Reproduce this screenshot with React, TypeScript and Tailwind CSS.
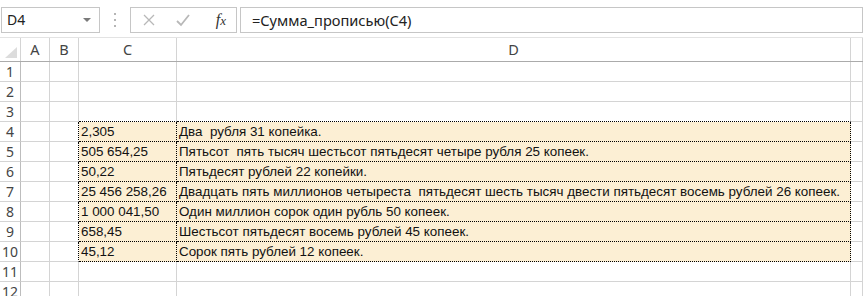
import React from "react";

const rows: { n: number; c?: string; d?: string }[] = [
  { n: 1 },
  { n: 2 },
  { n: 3 },
  { n: 4, c: "2,305", d: "Два  рубля 31 копейка." },
  { n: 5, c: "505 654,25", d: "Пятьсот  пять тысяч шестьсот пятьдесят четыре рубля 25 копеек." },
  { n: 6, c: "50,22", d: "Пятьдесят рублей 22 копейки." },
  {
    n: 7,
    c: "25 456 258,26",
    d: "Двадцать пять миллионов четыреста  пятьдесят шесть тысяч двести пятьдесят восемь рублей 26 копеек.",
  },
  { n: 8, c: "1 000 041,50", d: "Один миллион сорок один рубль 50 копеек." },
  { n: 9, c: "658,45", d: "Шестьсот пятьдесят восемь рублей 45 копеек." },
  { n: 10, c: "45,12", d: "Сорок пять рублей 12 копеек." },
  { n: 11 },
  { n: 12 },
];

const cols = "grid grid-cols-[21px_29px_29px_98px_674px_1fr]";

const App = () => {
  return (
    <div className="w-[863px] h-[296px] overflow-hidden bg-white font-['Noto_Sans',sans-serif]">
      {/* formula bar */}
      <div className="h-[37px] flex items-start pt-[7px] pl-[1px]">
        <div className="w-[101px] h-[26px] border border-[#c6c6c6] flex items-center justify-between pl-[5px] pr-[8px]">
          <span className="text-[14px] text-[#222] leading-none">D4</span>
          <span className="w-0 h-0 border-l-[4px] border-r-[4px] border-t-[4px] border-l-transparent border-r-transparent border-t-[#7a7a7a]" />
        </div>
        <div className="w-[31px] h-[26px] flex flex-col items-center justify-center gap-[4px]">
          <span className="w-[2px] h-[2px] bg-[#b5b5b5]" />
          <span className="w-[2px] h-[2px] bg-[#b5b5b5]" />
          <span className="w-[2px] h-[2px] bg-[#b5b5b5]" />
        </div>
        <div className="w-[110px] h-[26px] border border-[#c6c6c6] flex items-center">
          <svg width="14" height="14" viewBox="0 0 14 14" className="ml-[11px]">
            <path d="M2 2 L12 12 M12 2 L2 12" stroke="#b8b8b8" strokeWidth="1.3" />
          </svg>
          <svg width="16" height="14" viewBox="0 0 16 14" className="ml-[19px]">
            <path d="M2 8 L6 12 L14 2" stroke="#b8b8b8" strokeWidth="1.8" fill="none" />
          </svg>
          <span className="ml-[25px] text-[16px] italic text-[#333] font-['Liberation_Serif',serif] leading-none">
            f<span className="text-[13px]">x</span>
          </span>
        </div>
        <div className="ml-[3px] w-[640px] h-[26px] border border-[#c6c6c6] flex items-center pl-[11px]">
          <span className="text-[14.6px] text-[#222] leading-none">=Сумма_прописью(C4)</span>
        </div>
      </div>

      {/* column headers */}
      <div className={`${cols} h-[25px] border-t border-[#e3e3e3] border-b border-b-[#ababab] text-[14.5px] text-[#444]`}>
        <div className="border-r border-[#d4d4d4] flex items-end justify-end pr-[3px] pb-[3px]">
          <svg width="12" height="11" viewBox="0 0 12 11">
            <path d="M12 0 L12 11 L0 11 Z" fill="#dcdcdc" />
          </svg>
        </div>
        {["A", "B", "C", "D", ""].map((h, i) => (
          <div key={i} className="border-r border-[#d4d4d4] flex items-center justify-center leading-none">
            {h}
          </div>
        ))}
      </div>

      {/* rows */}
      {rows.map((r) => {
        const data = r.c !== undefined;
        const above = r.n === 3;
        const cellBase = "h-[20px] border-b border-r flex items-center overflow-visible whitespace-pre";
        const dataCls =
          "bg-[#fcefd4] border-dotted border-black text-[13.4px] text-[#111] font-['Liberation_Sans',sans-serif] pl-[2px] pt-[1px]";
        const edge = above ? "border-r-[#d4d4d4] border-b-black [border-bottom-style:dotted]" : "border-[#d4d4d4]";
        return (
          <div key={r.n} className={`${cols} h-[20px]`}>
            <div className="h-[20px] border-b border-r border-[#d4d4d4] border-r-[#bdbdbd] flex items-center justify-center text-[14px] text-[#444] leading-none">
              {r.n}
            </div>
            <div className={`${cellBase} border-[#d4d4d4]`} />
            <div
              className={`${cellBase} border-[#d4d4d4] ${data ? "border-r-black [border-right-style:dotted]" : ""}`}
            />
            <div className={`${cellBase} ${data ? dataCls : edge}`}>{r.c}</div>
            <div className={`${cellBase} ${data ? dataCls : edge}`}>{r.d}</div>
            <div className={`${cellBase} border-[#d4d4d4]`} />
          </div>
        );
      })}
    </div>
  );
};

export default App;
